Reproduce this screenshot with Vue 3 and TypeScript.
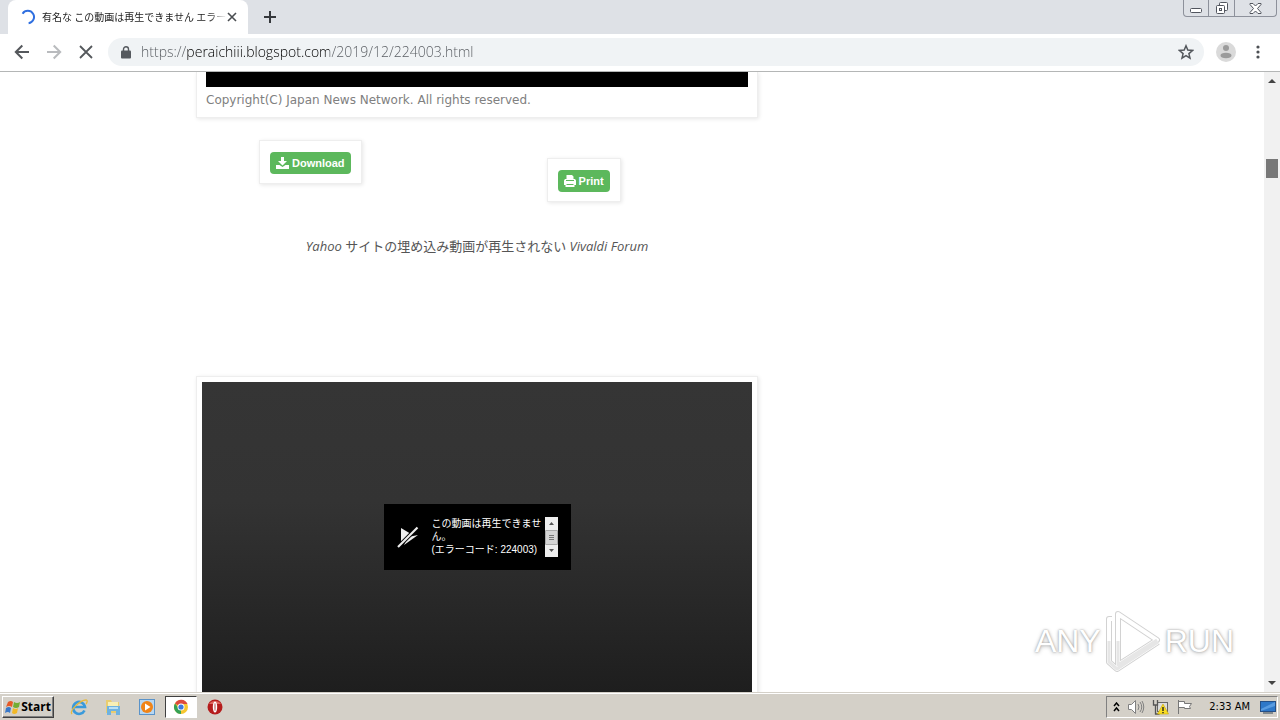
<script setup lang="ts">
import { ref } from 'vue'

const tabTitle = ref('有名な この動画は再生できません エラー')
const address = ref('https://peraichiii.blogspot.com/2019/12/224003.html')
const clock = ref('2:33 AM')
</script>

<template>
  <div class="desktop">
    <header class="tabstrip">
      <div class="tab">
        <svg class="spinner" width="16" height="16" viewBox="0 0 16 16"><path d="M2.6 4.7A6.2 6.2 0 1 1 8.6 14.2" fill="none" stroke="#2f6fe0" stroke-width="2" /></svg>
        <span class="tab-title">{{ tabTitle }}</span>
        <button class="tab-close" aria-label="Close tab">
          <svg width="10" height="10" viewBox="0 0 10 10"><path d="M1 1l8 8M9 1L1 9" stroke="#4a4d51" stroke-width="1.6" /></svg>
        </button>
      </div>
      <button class="new-tab" aria-label="New tab">
        <svg width="12" height="12" viewBox="0 0 12 12"><path d="M6 0v12M0 6h12" stroke="#35383c" stroke-width="2" /></svg>
      </button>
      <div class="window-controls">
        <button aria-label="Minimize" class="wc-min">
          <svg width="12" height="5" viewBox="0 0 12 5"><rect x=".5" y=".5" width="11" height="4" rx="1" fill="#fff" stroke="#51555e" /></svg>
        </button>
        <button aria-label="Restore" class="wc-max">
          <svg width="14" height="14" viewBox="0 0 14 14" fill="#fff" stroke="#51555e"><rect x="4.500" y="1.500" width="8" height="8" rx="1" /><rect x="1.500" y="4.500" width="8" height="8" rx="1" /><rect x="4.500" y="7.500" width="2" height="2" /></svg>
        </button>
        <button aria-label="Close window" class="wc-close">
          <svg width="13" height="11" viewBox="0 0 13 11"><path d="M1 .5h3l2.500 2.500L9 .5h3v1L8.500 5.500 12 9.500v1H9L6.500 8 4 10.500H1v-1l3.500-4L1 1.500z" fill="#fff" stroke="#51555e" /></svg>
        </button>
      </div>
    </header>

    <nav class="toolbar">
      <button class="nav-button" aria-label="Back">
        <svg width="16" height="16" viewBox="0 0 16 16"><path d="M15 8H2M8.300 1.500L1.800 8l6.500 6.500" fill="none" stroke="#55585c" stroke-width="2" /></svg>
      </button>
      <button class="nav-button" aria-label="Forward">
        <svg width="16" height="16" viewBox="0 0 16 16"><path d="M1 8h13M7.700 1.500L14.200 8l-6.500 6.500" fill="none" stroke="#b9bbbe" stroke-width="2" /></svg>
      </button>
      <button class="nav-button" aria-label="Stop loading">
        <svg width="16" height="16" viewBox="0 0 16 16"><path d="M2 2l12 12M14 2L2 14" stroke="#55585c" stroke-width="1.800" /></svg>
      </button>
      <div class="omnibox">
        <svg class="lock" width="10" height="13" viewBox="0 0 10 13"><rect y="4.500" width="10" height="8" rx="1" fill="#55595e" /><path d="M2.500 5V3.300a2.500 2.500 0 0 1 5 0V5" fill="none" stroke="#55595e" stroke-width="1.400" /></svg>
        <input v-model="address" class="address" type="text" aria-label="Address" spellcheck="false" />
        <button class="star" aria-label="Bookmark this page">
          <svg width="16" height="16" viewBox="0 0 16 16"><path d="M8 1.800l1.800 4.300 4.700.4-3.600 3.100 1.100 4.600L8 11.700l-4 2.500 1.100-4.600L1.500 6.500l4.700-.4z" fill="none" stroke="#53575c" stroke-width="1.500" /></svg>
        </button>
      </div>
      <button class="avatar" aria-label="Profile">
        <svg width="20" height="20" viewBox="0 0 20 20"><circle cx="10" cy="10" r="10" fill="#dadada" /><circle cx="10" cy="6" r="3" fill="#9b9b9b" /><path d="M4.500 13.500c0-1.800 2.200-2.800 5.500-2.800s5.500 1 5.500 2.800-2.200 2.800-5.500 2.800-5.500-1-5.500-2.800z" fill="#9b9b9b" /></svg>
      </button>
      <button class="more" aria-label="Menu">
        <svg width="4" height="14" viewBox="0 0 4 14" fill="#4d5054"><circle cx="2" cy="2" r="1.600" /><circle cx="2" cy="7" r="1.600" /><circle cx="2" cy="12" r="1.600" /></svg>
      </button>
    </nav>

    <div class="viewport">
      <main class="page">
        <article class="post">
          <section class="frame news">
            <div class="news-video"></div>
            <p class="copyright">Copyright(C) Japan News Network. All rights reserved.</p>
          </section>
          <div class="actions">
            <div class="frame action">
              <button class="green">
                <svg width="13" height="12" viewBox="0 0 13 12" fill="#fff"><path d="M5 0h3v4h3L6.500 8.500 2 4h3z" /><path d="M0 8h3.500l3 2 3-2H13v4H0z" /></svg>
                Download
              </button>
            </div>
            <div class="frame action print">
              <button class="green">
                <svg width="12" height="12" viewBox="0 0 12 12"><path d="M3 0h5l1.500 1.500V4H11l1 1.500V10h-1.500v2h-9v-2H0V5.500L1 4h1.500V0z" fill="#fff" /><path d="M2 5.500h8M2.500 9.500h7" stroke="#5cb85c" /></svg>
                Print
              </button>
            </div>
          </div>
          <p class="caption"><i>Yahoo</i> サイトの埋め込み動画が再生されない <i>Vivaldi Forum</i></p>
          <section class="frame player">
            <div class="screen">
              <div class="error">
                <svg width="22" height="22" viewBox="0 0 22 22" fill="#eee"><path d="M4 2l10 6L4 17z" /><path d="M21 9L7 19l4-8z" /><path d="M20.500 1.500L1 21" stroke="#000" stroke-width="4" /><path d="M20.500 1.500L1 21" stroke="#eee" stroke-width="2.200" /></svg>
                <div class="error-text">この動画は再生できません。<br />(エラーコード: 224003)</div>
                <div class="mini-scroll">
                  <svg width="13" height="40" viewBox="0 0 13 40"><path d="M4 8l2.500-3L9 8zM4 32l2.500 3L9 32z" fill="#555" /><path d="M.5 13.500h12v14H.5z" fill="#d5d5d5" stroke="#aaa" /><path d="M4 18.500h5M4 20.500h5M4 22.500h5" stroke="#777" /></svg>
                </div>
              </div>
            </div>
          </section>
        </article>
      </main>
      <div class="scrollbar">
        <svg width="8" height="4" viewBox="0 0 8 4"><path d="M0 4l4-4 4 4z" fill="#444" /></svg>
        <div class="track"><div class="thumb"></div></div>
        <svg width="8" height="4" viewBox="0 0 8 4"><path d="M0 0h8L4 4z" fill="#444" /></svg>
      </div>
      <div class="watermark">
        <span>ANY</span>
        <svg width="58" height="64" viewBox="0 0 58 64" fill="none" stroke-linejoin="round">
          <g stroke="#d2d2d2" stroke-width="6"><path d="M14 5L53 31 14 56z" /><path d="M8 10H5v43l8 7L54 33" /></g>
          <g stroke="#fff" stroke-width="4"><path d="M14 5L53 31 14 56z" /><path d="M8 10H5v43l8 7L54 33" /></g>
          <g stroke="#e6e6e6" stroke-width="3"><path d="M14 32v24l39-25M5 32v21l8 7L54 33" /></g>
        </svg>
        <span>RUN</span>
      </div>
    </div>

    <footer class="taskbar">
      <button class="start">
        <svg width="16" height="16" viewBox="0 0 16 16"><path d="M3 3q3-2 5 0L7 8Q4 6 1 8z" fill="#e65a28" /><path d="M9 3q3 2 6 0l-1 5q-3 2-6 0z" fill="#72ad35" /><path d="M1 9q3-2 5 0l-1 5Q3 12 0 14z" fill="#3878c9" /><path d="M8 9q3 2 5 0l-1 5q-3 2-5 0z" fill="#f2b927" /></svg>
        Start
      </button>
      <div class="launch">
        <button aria-label="Internet Explorer">
          <svg width="18" height="18" viewBox="0 0 18 18" fill="none"><path d="M14.500 12.500A6 6 0 1 1 15 9H4" stroke="#3a9adb" stroke-width="2.600" /><path d="M2 16C-1 13 10 2 16 2c2 0 1 3 0 4" stroke="#e8b93c" stroke-width="1.300" /></svg>
        </button>
        <button aria-label="File Explorer">
          <svg width="18" height="18" viewBox="0 0 18 18"><path d="M2 2h5l1 2h7v11H2z" fill="#e9cd70" /><path d="M4 4h10v4H4z" fill="#f8efb5" /><path d="M3 8h13v9h-4v-4H7v4H3z" fill="#6fb2e0" /><path d="M5 9h9v2H5z" fill="#b9e0f5" /></svg>
        </button>
        <button aria-label="Media Player">
          <svg width="18" height="18" viewBox="0 0 18 18"><rect x="1.500" y="1.500" width="15" height="15" fill="#b7d7f2" stroke="#5a93c9" /><circle cx="9" cy="9" r="6" fill="#f08418" /><path d="M7 5.500L12.500 9 7 12.500z" fill="#fff" /></svg>
        </button>
        <button class="active" aria-label="Chrome">
          <svg width="16" height="16" viewBox="0 0 16 16"><circle cx="8" cy="8" r="7" fill="#f6c630" /><path d="M8 8L2 4.400A7 7 0 0 1 14.500 5H8z" fill="#dd4b3e" /><path d="M8 8l0 7A7 7 0 0 1 2 4.400L5.500 9z" fill="#35a155" /><circle cx="8" cy="8" r="3.500" fill="#fff" /><circle cx="8" cy="8" r="2.600" fill="#3c79df" /></svg>
        </button>
        <button aria-label="Opera">
          <svg width="16" height="16" viewBox="0 0 16 16"><circle cx="8" cy="8" r="7.500" fill="#b51c1c" /><path d="M2 5a7 6 0 0 1 12 0z" fill="#df6760" /><ellipse cx="8" cy="8" rx="2.200" ry="5.500" fill="#fff" /><ellipse cx="8" cy="8" rx=".8" ry="4" fill="#c88" /></svg>
        </button>
      </div>
      <div class="tray">
        <svg width="7" height="10" viewBox="0 0 7 10"><path d="M1 4l2.500-3L6 4M1 9l2.500-3L6 9" fill="none" stroke="#000" stroke-width="1.500" /></svg>
        <svg width="18" height="16" viewBox="0 0 18 16" fill="#fff" stroke="#808080"><path d="M1.500 5.500h3l4-4v13l-4-4h-3z" /><path d="M11 5q2 3 0 6M13 3q3.500 5 0 10M15 2q3.500 6 0 12" fill="none" /></svg>
        <svg width="17" height="16" viewBox="0 0 17 16"><rect x="5.500" y="3.500" width="10" height="9" fill="#ddd" stroke="#666" /><path d="M1.500 1v5h4V1M3.500 6v9h4" fill="none" stroke="#555" stroke-width="1.300" /><path d="M11 5l5.500 10h-11z" fill="#f9dd22" stroke="#c9a800" stroke-width=".6" /><path d="M11 8v4M11 13v1.300" stroke="#222" stroke-width="1.400" /></svg>
        <svg width="17" height="16" viewBox="0 0 17 16"><path d="M2.500 1v14M2.500 2.500h6v2h7l-2 3 1 2H8.500v-1h-6z" fill="#fff" stroke="#777" /></svg>
        <time>{{ clock }}</time>
        <button class="show-desktop" aria-label="Show desktop">
          <svg width="16" height="14" viewBox="0 0 16 14"><rect x=".5" y="1.500" width="15" height="10" fill="#2f78c8" stroke="#254f86" /><path d="M1 9L15 2v4L1 11z" fill="#5a9ce0" /><path d="M3 13h10" stroke="#345" /></svg>
        </button>
      </div>
    </footer>
  </div>
</template>

<style>
html, body { margin: 0; overflow: hidden; }
</style>

<style scoped>
* { box-sizing: border-box; }
button { border: 0; padding: 0; margin: 0; background: none; display: flex; align-items: center; justify-content: center; font: inherit; }
svg { flex: none; display: block; }
p { margin: 0; }
.desktop { height: 100vh; display: flex; flex-direction: column; background: #fff; font-family: "Open Sans", "Noto Sans CJK JP", sans-serif; }

.tabstrip { flex: none; height: 34px; display: flex; background: #dee1e6; padding-left: 8px; }
.tab { width: 240px; display: flex; align-items: center; padding: 0 11px 0 12px; background: #fff; border-radius: 8px 8px 0 0; }
.tab-title { flex: 1; min-width: 0; margin-left: 6px; overflow: hidden; white-space: nowrap; font: 10px/16px "Noto Sans CJK JP", sans-serif; color: #222; mask-image: linear-gradient(to right, #000 90%, transparent); }
.tab-close { width: 10px; height: 16px; }
.new-tab { width: 28px; margin-left: 8px; }
.window-controls { display: flex; height: 17px; margin-left: auto; margin-right: 3px; border: 1px solid #8d919b; border-top: 0; border-radius: 0 0 4px 4px; }
.window-controls button + button { border-left: 1px solid #8d919b; }
.wc-min { width: 24px; padding-top: 4px; }
.wc-max { width: 26px; }
.wc-close { width: 42px; }

.toolbar { flex: none; height: 38px; display: flex; align-items: center; padding: 0 12px 1px 6px; border-bottom: 1px solid #b4b6b6; }
.nav-button { width: 32px; height: 32px; }
.omnibox { flex: 1; height: 28px; display: flex; align-items: center; margin-left: 6px; padding: 0 10px 0 13px; border-radius: 14px; background: #f0f3f5; }
.address { flex: 1; min-width: 0; border: 0; outline: 0; padding: 0; margin-left: 10px; font: 300 14px/20px "Open Sans", sans-serif; color: transparent; background: linear-gradient(to right, #55595e 46px, #000 46px, #000 188px, #55595e 188px); background-clip: text; -webkit-background-clip: text; }
.star { width: 16px; height: 16px; }
.avatar { width: 20px; height: 20px; margin-left: 12px; }
.more { width: 20px; height: 20px; margin-left: 12px; }

.viewport { flex: 1; min-height: 0; position: relative; display: flex; }
.page { flex: 1; min-width: 0; overflow: hidden; padding-left: 196px; }
.post { width: 562px; }
.frame { background: #fff; border: 1px solid #eee; box-shadow: 1px 1px 4px rgba(0, 0, 0, 0.1); }
.news { border-top: 0; padding: 0 9px 7px; }
.news-video { height: 15px; background: #000; }
.copyright { padding-top: 3px; font: 12px/20px "DejaVu Sans", sans-serif; color: #808080; }
.actions { display: flex; align-items: flex-start; padding: 22px 0 0 63px; height: 116px; }
.action { padding: 11px 10px 9px; }
.print { margin: 18px 0 0 185px; }
.green { height: 22px; padding: 0 6px; gap: 3px; border-radius: 4px; background: #5cb85c; color: #fff; font: bold 11px/18px "Liberation Sans", sans-serif; }
.caption { text-align: center; font-size: 13px; line-height: 24px; color: #555; }
.player { margin-top: 118px; padding: 5px; }
.screen { height: 420px; padding-top: 122px; background: linear-gradient(#353535, #333 120px, #1e1e1e 310px); }
.error { width: 187px; height: 66px; margin: 0 auto; display: flex; align-items: center; padding: 0 13px; background: #000; }
.error-text { flex: 1; width: 112px; margin-left: 13px; padding-bottom: 2px; color: #fff; font: 10px/13px "Liberation Sans", "Noto Sans CJK JP", sans-serif; }
.mini-scroll { width: 13px; height: 40px; background: #eee; }

.scrollbar { width: 16px; display: flex; flex-direction: column; align-items: center; padding: 7px 0; background: #f1f1f1; }
.track { flex: 1; width: 12px; padding-top: 76px; }
.thumb { height: 19px; background: #787878; }
.watermark { position: absolute; right: 46px; bottom: 19px; display: flex; align-items: center; gap: 3px; color: #fff; font: 32px/64px "Liberation Sans", sans-serif; text-shadow: 0 0 2px #999, 0 1px 4px #bbb; }

.taskbar { flex: none; height: 28px; display: flex; align-items: center; padding: 2px 2px 1px; background: #d4d0c8; border-top: 1px solid #d4d0c8; box-shadow: inset 0 1px #fff; }
.start { width: 52px; height: 22px; gap: 0; background: #d4d0c8; border: 1px solid; border-color: #fff #404040 #404040 #fff; box-shadow: inset -1px -1px #808080; font: bold 12px/18px "Open Sans", sans-serif; color: #000; }
.launch { display: flex; margin-left: 9px; gap: 2px; }
.launch button { width: 32px; height: 22px; }
.launch .active { background: #fff; border: 1px solid; border-color: #404040 #fff #fff #404040; }
.tray { margin-left: auto; height: 22px; display: flex; align-items: center; padding: 0 1px 0 6px; gap: 7px; border: 1px solid; border-color: #808080 #fff #fff #808080; }
.tray time { margin-left: 9px; font: 11px/18px "DejaVu Sans Condensed", "DejaVu Sans", sans-serif; color: #000; }
.show-desktop { margin-left: 3px; }
</style>
